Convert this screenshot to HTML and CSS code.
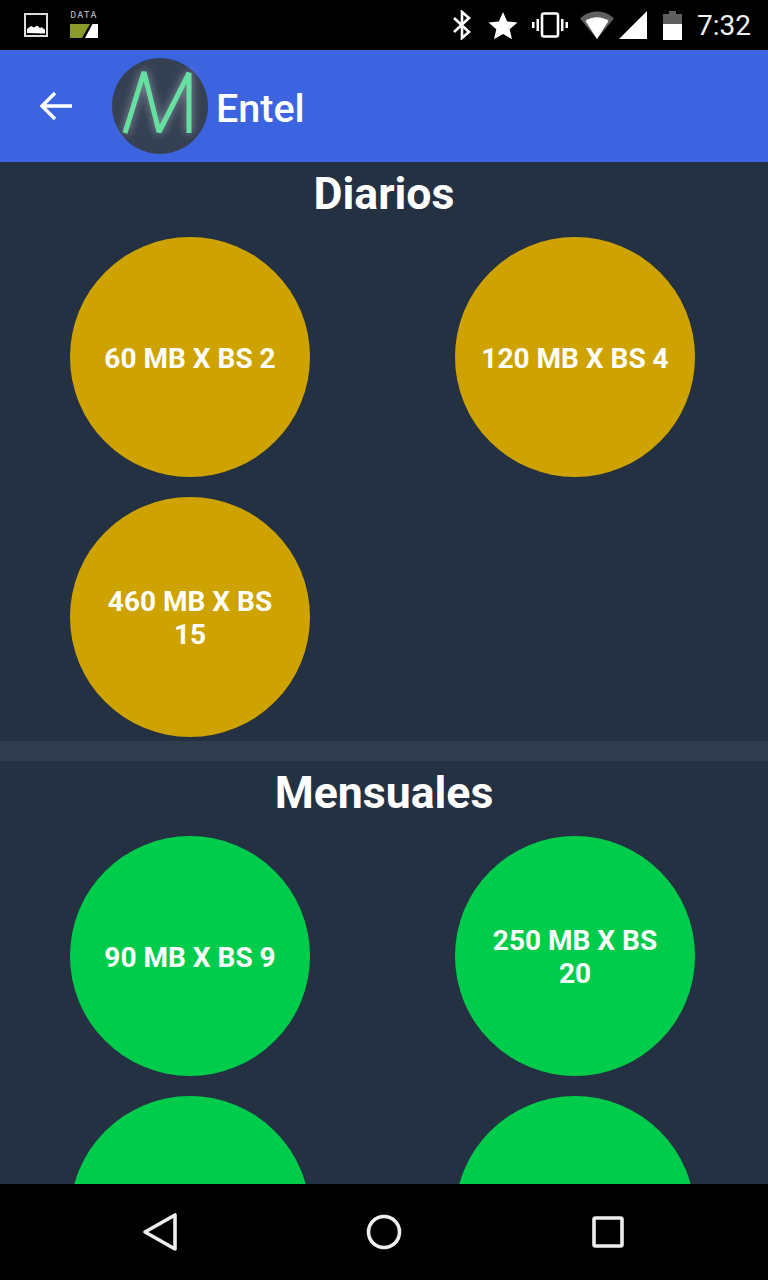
FILE: index.html
```html
<!DOCTYPE html>
<html lang="es">
<head>
    <meta charset="UTF-8">
    <meta name="viewport" content="width=device-width, initial-scale=1.0">
    <title>Entel</title>
    <link rel="stylesheet" href="styles.css">
</head>
<body>
    <div class="status-bar">
        <div class="status-left">
            <svg class="icon-image" width="24" height="24" viewBox="0 0 24 24">
                <rect x="1" y="1" width="22" height="22" fill="none" stroke="#ddd" stroke-width="2"/>
                <path d="M3 20v-4l4-3 3 1.500 3-2 3 2.500 2-1 1 1.500 2 1v4z" fill="#fff"/>
            </svg>
            <div class="data-icon">
                <span class="data-label">DATA</span>
                <svg width="28" height="14" viewBox="0 0 28 14">
                    <path d="M0 0h20l-8 14H0z" fill="#8a9a2b"/>
                    <path d="M22.500 0H28v14H15z" fill="#fff"/>
                </svg>
            </div>
        </div>
        <div class="status-right">
            <svg width="22" height="30" viewBox="0 0 22 30">
                <path d="M3 8l15 14-7 6V2l7 6L3 22" fill="none" stroke="#fff" stroke-width="2.600"/>
            </svg>
            <svg class="star" width="30" height="28" viewBox="0 0 30 28">
                <path d="M15 1l4.200 9.400 10.300 1-7.800 6.800 2.300 10L15 23l-9 5.200 2.300-10L.5 11.400l10.300-1z" fill="#fff"/>
            </svg>
            <svg class="vibrate" width="36" height="30" viewBox="0 0 36 30">
                <rect x="10" y="3.500" width="16" height="23" rx="2" fill="none" stroke="#fff" stroke-width="2.600"/>
                <path d="M4.500 9H7v12H4.500zM29 9h2.500v12H29zM0 12h2.500v6H0zM33.500 12H36v6h-2.500z" fill="#fff"/>
            </svg>
            <svg class="wifi" width="34" height="28" viewBox="0 0 34 28">
                <path d="M0 7.500C9-2 25-2 34 7.500L17 28z" fill="#5f5f5f"/>
                <path d="M5.500 10c6.500-5 16.500-5 23 0L17 28z" fill="#fff"/>
            </svg>
            <svg class="signal" width="28" height="28" viewBox="0 0 28 28">
                <path d="M28 0v28H0z" fill="#fff"/>
            </svg>
            <svg class="battery" width="19" height="29" viewBox="0 0 19 29">
                <path d="M6 0h7v3h6v11H0V3h6z" fill="#5f5f5f"/>
                <path d="M0 13h19v16H0z" fill="#fff"/>
            </svg>
            <span class="clock">7:32</span>
        </div>
    </div>

    <header class="toolbar">
        <svg class="back" width="34" height="32" viewBox="0 0 34 32">
            <path d="M33 16H3M16 3L3 16l13 13" fill="none" stroke="#fff" stroke-width="3.400"/>
        </svg>
        <div class="logo">
            <svg width="96" height="96" viewBox="0 0 96 96">
                <defs>
                    <filter id="glow" x="-30%" y="-30%" width="160%" height="160%">
                        <feGaussianBlur stdDeviation="4"/>
                    </filter>
                </defs>
                <circle cx="48" cy="48" r="48" fill="#354053"/>
                <path d="M13 75L32 14l15 60 30-59v60" fill="none" stroke="#a9b6c0" stroke-width="7" stroke-linejoin="bevel" opacity=".6" filter="url(#glow)"/>
                <path d="M13 75L32 14l15 60 30-59v60" fill="none" stroke="#66e0a0" stroke-width="5" stroke-linejoin="bevel"/>
            </svg>
        </div>
        <h1 class="toolbar-title">Entel</h1>
    </header>

    <main class="content">
        <section class="plans">
            <h2>Diarios</h2>
            <div class="plan-grid">
                <div class="plan daily">60 MB X BS 2</div>
                <div class="plan daily">120 MB X BS 4</div>
                <div class="plan daily">460 MB X BS 15</div>
            </div>
        </section>
        <div class="divider"></div>
        <section class="plans">
            <h2>Mensuales</h2>
            <div class="plan-grid">
                <div class="plan monthly">90 MB X BS 9</div>
                <div class="plan monthly">250 MB X BS 20</div>
                <div class="plan monthly"></div>
                <div class="plan monthly"></div>
            </div>
        </section>
    </main>

    <nav class="nav-bar">
        <svg width="36" height="40" viewBox="0 0 36 40">
            <path d="M33 3v34L3 20z" fill="none" stroke="#eee" stroke-width="3.600" stroke-linejoin="round"/>
        </svg>
        <svg class="nav-home" width="36" height="36" viewBox="0 0 36 36">
            <circle cx="18" cy="18" r="15.500" fill="none" stroke="#eee" stroke-width="3.600"/>
        </svg>
        <svg class="nav-recent" width="32" height="32" viewBox="0 0 32 32">
            <rect x="2" y="2" width="28" height="28" rx="1.500" fill="none" stroke="#eee" stroke-width="3.600"/>
        </svg>
    </nav>
</body>
</html>
```
FILE: styles.css
```css
body {
    margin: 0;
    height: 1280px;
    overflow: hidden;
    display: flex;
    flex-direction: column;
    font-family: Roboto, sans-serif;
    background-color: #243142;
    color: #fff;
}
.status-bar {
    height: 50px;
    flex: none;
    background: #000;
    display: flex;
    justify-content: space-between;
    align-items: center;
}
.status-left {
    display: flex;
    align-items: center;
    gap: 22px;
    padding-left: 24px;
}
.data-icon {
    display: flex;
    flex-direction: column;
    align-items: center;
    gap: 4px;
    padding-bottom: 2px;
}
.data-label {
    font-size: 9px;
    line-height: 9px;
    font-weight: 500;
    letter-spacing: 1.3px;
    color: #aaa;
}
.status-right {
    display: flex;
    align-items: center;
    padding-right: 17px;
}
.star {
    margin-left: 15px;
}
.vibrate {
    margin-left: 14px;
}
.wifi {
    margin-left: 12px;
}
.signal {
    margin-left: 5px;
}
.battery {
    margin-left: 16px;
}
.clock {
    font-size: 28px;
    margin-left: 15px;
    color: #f2f2f2;
}
.toolbar {
    height: 112px;
    flex: none;
    background-color: #3d64e0;
    display: flex;
    align-items: center;
    padding-left: 39px;
}
.logo {
    width: 96px;
    height: 96px;
    margin-left: 39px;
}
.toolbar-title {
    margin: 0 0 0 8px;
    padding-top: 4px;
    font-size: 39.5px;
    font-weight: 500;
}
.content {
    flex: 1;
    min-height: 0;
    overflow: hidden;
}
.plans h2 {
    margin: 0;
    height: 75px;
    line-height: 64px;
    text-align: center;
    font-size: 44.6px;
    font-weight: 700;
}
.plan-grid {
    display: grid;
    grid-template-columns: 240px 240px;
    column-gap: 145px;
    row-gap: 20px;
    padding: 0 0 4px 70px;
}
.plan {
    width: 240px;
    height: 240px;
    border-radius: 50%;
    display: flex;
    align-items: center;
    justify-content: center;
    text-align: center;
    box-sizing: border-box;
    padding: 2px 20px 0;
    font-size: 28px;
    line-height: 33px;
    font-weight: 700;
}
.daily {
    background-color: #cea300;
}
.monthly {
    background-color: #00cc4b;
}
.divider {
    height: 20px;
    background-color: #2f3c4e;
}
.nav-bar {
    height: 96px;
    flex: none;
    background: #000;
    display: flex;
    align-items: center;
    justify-content: center;
    padding-right: 2px;
}
.nav-home {
    margin-left: 188px;
}
.nav-recent {
    margin-left: 190px;
}
```
